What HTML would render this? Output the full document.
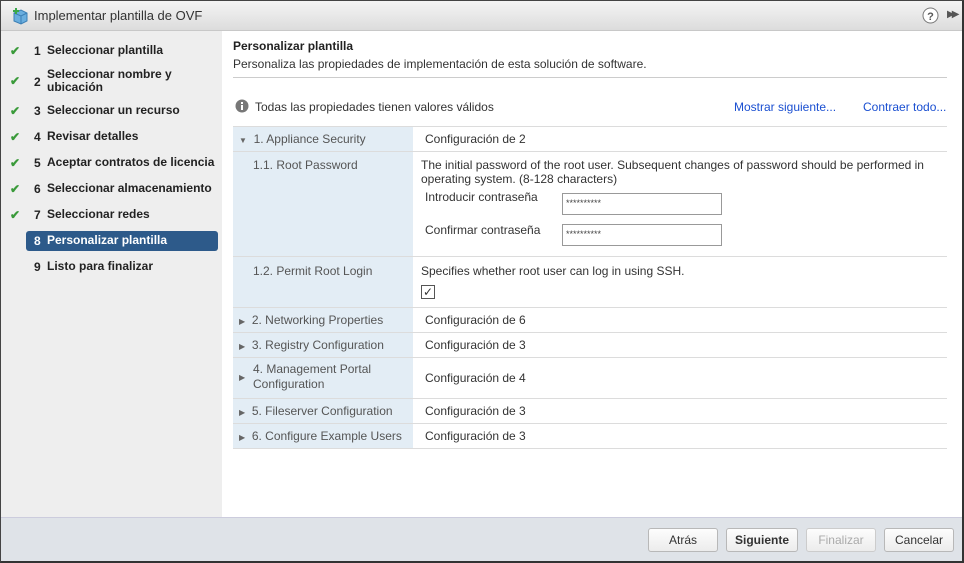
<!DOCTYPE html>
<html><head><meta charset="utf-8"><style>
*{box-sizing:border-box;margin:0;padding:0}
body{width:964px;height:563px;overflow:hidden;font-family:"Liberation Sans",Arial,sans-serif;font-size:12px;color:#333;background:#fff;position:relative}
.frame{position:absolute;left:0;top:0;width:964px;height:563px;border:1px solid #444;border-right:2px solid #333;border-bottom:2px solid #333}
.title{position:absolute;left:1px;top:1px;width:961px;height:30px;background:linear-gradient(#f4f4f4,#dcdcdc);border-bottom:1px solid #c8c8c8}
.title span{position:absolute;left:33px;top:7px;font-size:13px;color:#333}
.left{position:absolute;left:1px;top:31px;width:221px;height:486px;background:#eeeeee}
.step{position:absolute;left:0;font-size:12px;color:#222}
.step .ck{position:absolute;left:9px;color:#3a9a3a;font-weight:bold}
.step .n{position:absolute;left:33px;font-weight:bold}
.step .t{position:absolute;left:46px;font-weight:bold;width:170px;line-height:13px}
.sel{position:absolute;left:25px;top:200px;width:192px;height:20px;background:#2d5a8a;border-radius:3px}
.a{position:absolute;white-space:nowrap}
.foot{position:absolute;left:1px;top:517px;width:961px;height:44px;background:#dfe3e8;border-top:1px solid #ccd}
.btn{position:absolute;top:528px;height:24px;border:1px solid #b8b8b8;border-radius:3px;background:linear-gradient(#fdfdfd,#ececec);text-align:center;line-height:22px;font-size:12px;color:#333}
table{position:absolute;left:233px;top:126px;width:714px;border-collapse:collapse}
td{border-bottom:1px solid #dcdcdc;vertical-align:top;font-size:12px;color:#333}
td.l{width:180px;background:#e3edf5;padding-left:20px;color:#555}
td.r{padding-left:12px}
.inp{position:absolute;width:160px;height:22px;border:1px solid #999;background:#fff;font-size:9px;padding:2px 3px;color:#444}
.link{color:#1a4fd1;position:absolute}
</style></head><body>
<div class="title"><svg style="position:absolute;left:10px;top:6px" width="18" height="18" viewBox="0 0 18 18"><path d="M3 6 L10 3 L16 6 L16 14 L10 17 L3 14Z" fill="#6aaede" stroke="#3b7fb5"/><path d="M3 6 L10 9 L16 6 M10 9 L10 17" stroke="#3b7fb5" fill="none"/><path d="M2 0v6M-1 3h6" transform="translate(3,1)" stroke="#3aa84a" stroke-width="2"/></svg><span>Implementar plantilla de OVF</span>
<svg style="position:absolute;left:921px;top:6px" width="17" height="17"><circle cx="8.5" cy="8.5" r="7.5" fill="#fff" stroke="#777"/><text x="8.5" y="13" font-size="11" font-weight="bold" text-anchor="middle" fill="#555" font-family="Liberation Sans">?</text></svg>
<div class="a" style="left:946px;top:8px;font-size:10px;color:#555;letter-spacing:-3px">▶▶</div></div>
<div class="left">
<div class="sel"></div>
<div class="step" style="top:13px"><span class="ck">✔</span><span class="n">1</span><span class="t">Seleccionar plantilla</span></div>
<div class="step" style="top:37px"><span class="ck" style="top:6px">✔</span><span class="n" style="top:7px">2</span><span class="t">Seleccionar nombre y ubicación</span></div>
<div class="step" style="top:73px"><span class="ck">✔</span><span class="n">3</span><span class="t">Seleccionar un recurso</span></div>
<div class="step" style="top:99px"><span class="ck">✔</span><span class="n">4</span><span class="t">Revisar detalles</span></div>
<div class="step" style="top:125px"><span class="ck">✔</span><span class="n">5</span><span class="t">Aceptar contratos de licencia</span></div>
<div class="step" style="top:151px"><span class="ck">✔</span><span class="n">6</span><span class="t">Seleccionar almacenamiento</span></div>
<div class="step" style="top:177px"><span class="ck">✔</span><span class="n">7</span><span class="t">Seleccionar redes</span></div>
<div class="step" style="top:203px;color:#fff"><span class="n">8</span><span class="t">Personalizar plantilla</span></div>
<div class="step" style="top:229px"><span class="n">9</span><span class="t">Listo para finalizar</span></div>
</div>
<div class="a" style="left:233px;top:39px;font-weight:bold;color:#222">Personalizar plantilla</div>
<div class="a" style="left:233px;top:57px;color:#333">Personaliza las propiedades de implementación de esta solución de software.</div>
<div class="a" style="left:233px;top:77px;width:714px;border-top:1px solid #ccc"></div>
<svg style="position:absolute;left:235px;top:99px" width="14" height="14"><circle cx="7" cy="7" r="6.5" fill="#777"/><rect x="6" y="6" width="2" height="5" fill="#fff"/><rect x="6" y="3" width="2" height="2" fill="#fff"/></svg>
<div class="a" style="left:255px;top:100px">Todas las propiedades tienen valores válidos</div>
<div class="link" style="left:734px;top:100px">Mostrar siguiente...</div>
<div class="link" style="left:863px;top:100px">Contraer todo...</div>
<table style="border-top:1px solid #dcdcdc">
<tr style="height:25px"><td class="l" style="padding-left:6px;padding-top:5px"><span style="font-size:8px;color:#666">▼</span>&nbsp; 1. Appliance Security</td><td class="r" style="padding-top:5px">Configuración de 2</td></tr>
<tr style="height:105px"><td class="l" style="padding-top:6px">1.1. Root Password</td><td class="r" style="padding-top:6px;padding-left:8px;position:relative;line-height:14px">The initial password of the root user. Subsequent changes of password should be performed in operating system. (8-128 characters)
<div class="a" style="left:12px;top:38px">Introducir contraseña</div><div class="inp" style="left:149px;top:41px">**********</div>
<div class="a" style="left:12px;top:71px">Confirmar contraseña</div><div class="inp" style="left:149px;top:72px">**********</div></td></tr>
<tr style="height:51px"><td class="l" style="padding-top:7px">1.2. Permit Root Login</td><td class="r" style="padding-top:7px;padding-left:8px;position:relative">Specifies whether root user can log in using SSH.<div class="a" style="left:8px;top:28px;width:14px;height:14px;border:1px solid #555;background:#fff;font-size:12px;line-height:12px;text-align:center">✓</div></td></tr>
<tr style="height:25px"><td class="l" style="padding-left:6px;padding-top:5px"><span style="font-size:8px;color:#666">▶</span>&nbsp; 2. Networking Properties</td><td class="r" style="padding-top:5px">Configuración de 6</td></tr>
<tr style="height:25px"><td class="l" style="padding-left:6px;padding-top:5px"><span style="font-size:8px;color:#666">▶</span>&nbsp; 3. Registry Configuration</td><td class="r" style="padding-top:5px">Configuración de 3</td></tr>
<tr style="height:41px"><td class="l" style="padding-left:6px;padding-top:4px;position:relative"><span style="font-size:8px;color:#666;position:absolute;left:6px;top:15px">▶</span><div style="padding-left:14px;line-height:15px">4. Management Portal Configuration</div></td><td class="r" style="vertical-align:middle">Configuración de 4</td></tr>
<tr style="height:25px"><td class="l" style="padding-left:6px;padding-top:5px"><span style="font-size:8px;color:#666">▶</span>&nbsp; 5. Fileserver Configuration</td><td class="r" style="padding-top:5px">Configuración de 3</td></tr>
<tr style="height:25px"><td class="l" style="padding-left:6px;padding-top:5px"><span style="font-size:8px;color:#666">▶</span>&nbsp; 6. Configure Example Users</td><td class="r" style="padding-top:5px">Configuración de 3</td></tr>
</table>
<div class="foot"></div>
<div class="btn" style="left:648px;width:70px">Atrás</div>
<div class="btn" style="left:726px;width:72px;font-weight:bold">Siguiente</div>
<div class="btn" style="left:806px;width:70px;color:#aaa;border-color:#ccc">Finalizar</div>
<div class="btn" style="left:884px;width:70px">Cancelar</div>
<div class="frame"></div>
</body></html>
